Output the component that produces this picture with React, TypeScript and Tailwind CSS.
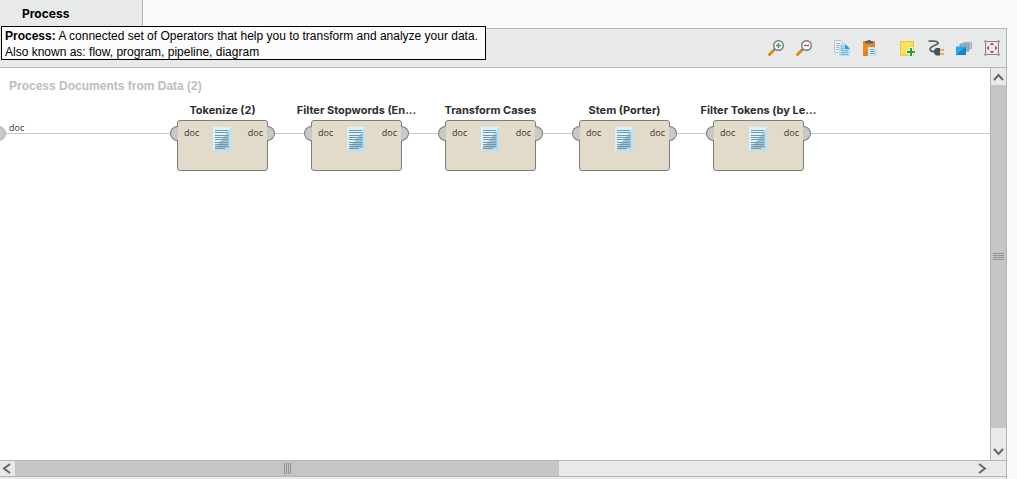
import type { ReactNode } from "react";

type Operator = { name: string; x: number };

const operators: Operator[] = [
  { name: "Tokenize (2)", x: 177 },
  { name: "Filter Stopwords (En...", x: 311 },
  { name: "Transform Cases", x: 445 },
  { name: "Stem (Porter)", x: 579 },
  { name: "Filter Tokens (by Le...", x: 713 },
];

function Icon({ children }: { children: ReactNode }) {
  return (
    <svg viewBox="0 0 16 16" className="block size-4" aria-hidden="true">
      {children}
    </svg>
  );
}

function Magnifier({ plus }: { plus?: boolean }) {
  return (
    <Icon>
      <path d="M1.500 14.500 5.500 10.500" stroke="#e08a16" strokeWidth="3" strokeLinecap="round" />
      <path d="M5.600 10.400 7 9" stroke="#7a6a55" strokeWidth="1.5" />
      <circle cx="10.500" cy="5.500" r="4.800" fill="#fbfdfc" stroke="#687d89" strokeWidth="1.4" />
      {plus ? (
        <path d="M8 5.5h5M10.5 3v5" stroke="#4b9a2c" strokeWidth="1.4" />
      ) : (
        <path d="M8 5.5h5" stroke="#d9482b" strokeWidth="1.4" />
      )}
    </Icon>
  );
}

function CopyIcon() {
  return (
    <Icon>
      <path d="M.5.5h6l2.500 2.500v9.500H.5z" fill="#eef1f2" stroke="#b9c1c5" />
      <path d="M2 3.500h4M2 5.500h4M2 7.500h3M2 9.500h3" stroke="#aab3b8" />
      <path d="M5 4h7l4 4v8H5z" fill="#b4dff4" />
      <path d="M11 4v5h5z" fill="#1fa0df" />
      <path d="M7 6.500h3M7 8.500h3M7 10.500h7M7 12.500h7M7 14.500h7" stroke="#80b4cc" />
    </Icon>
  );
}

function PasteIcon() {
  return (
    <Icon>
      <path d="M1 1h12v15H1z" fill="#ec7a08" />
      <path d="M1 1h12L1 14z" fill="#f28a1a" />
      <path d="M3 1h2.500V0h3v1H11v2.500H3z" fill="#536570" />
      <path d="M6 7h6l2 2v7H6z" fill="#d6effa" stroke="#9ccbe0" strokeWidth=".6" />
      <path d="M8 9.500h4M8 11.500h5M8 13.500h5" stroke="#5f9cb9" />
    </Icon>
  );
}

function NoteIcon() {
  return (
    <Icon>
      <path d="M.5 1.500h13v14H.5z" fill="#f9e45c" stroke="#e7cb3c" />
      <path d="M13 2v13H1z" fill="#f5dc4a" />
      <path d="M6 12h10M11 7v9" stroke="#f5f7f5" strokeWidth="4" />
      <path d="M7 12h8M11 8v8" stroke="#17a34a" strokeWidth="2" />
    </Icon>
  );
}

function PlugIcon() {
  return (
    <Icon>
      <path
        d="M.5 1.200h5.500c4 0 5.500 2 2.500 3.300L4 6.700C1 8.200 2 11.500 5 11.500h2"
        fill="none"
        stroke="#536570"
        strokeWidth="1.800"
      />
      <path d="M12 8v7.500H9c-2 0-3-1.700-3-3.700S7 8 9 8z" fill="#44545f" />
      <path d="M12 10h4M12 14h4" stroke="#e39a32" strokeWidth="1.600" />
    </Icon>
  );
}

function LayersIcon() {
  return (
    <Icon>
      <path d="M7 2h9v7H7z" fill="#b9c7cd" />
      <path d="M7.500 2.500h8v6h-8z" fill="none" stroke="#a3b3ba" />
      <path d="M4 4h9v7H4z" fill="#96aebb" stroke="#7e96a2" strokeWidth=".8" />
      <path d="M0 6.500h10V15H0z" fill="#2ba7ea" />
      <path d="M10 6.500V15H0z" fill="#0f87d2" />
    </Icon>
  );
}

function FitIcon() {
  return (
    <Icon>
      <path d="M1.500 0v16M14.500 0v16M0 1.500h16M0 14.500h16" stroke="#7b8a91" />
      <path d="M8 2.500 10.200 5H5.800zM8 13.500 10.200 11H5.800zM2.500 8 5 5.800v4.400zM13.500 8 11 5.800v4.400z" fill="#cf4529" />
    </Icon>
  );
}

const toolGroups = [
  [
    { label: "Zoom in", icon: <Magnifier plus /> },
    { label: "Zoom out", icon: <Magnifier /> },
  ],
  [
    { label: "Copy", icon: <CopyIcon /> },
    { label: "Paste", icon: <PasteIcon /> },
  ],
  [
    { label: "Add note", icon: <NoteIcon /> },
    { label: "Auto-wire", icon: <PlugIcon /> },
    { label: "Order operators", icon: <LayersIcon /> },
    { label: "Fit canvas", icon: <FitIcon /> },
  ],
];

function DocumentIcon() {
  return (
    <svg viewBox="0 0 18 24" className="h-6 w-[18px]" aria-hidden="true">
      <path d="M0 0h18v24H0z" fill="#b5e2f6" />
      <path d="M0 0h18L0 24z" fill="#daf2fb" />
      <path d="M16 5v16H2z" fill="#9cc4d6" />
      <path
        d="M2 3.500h13M2 5.500h13M2 8.500h13M2 10.500h13M2 12.500h13M2 15.500h13M2 17.500h13M2 19.500h13M2 21.500h10"
        stroke="#7498a9"
      />
    </svg>
  );
}

function OperatorNode({ name, x }: Operator) {
  return (
    <div className="absolute top-[34px] flex w-[91px] flex-col items-center" style={{ left: x }}>
      <div className="h-[18px] text-[11px] leading-4 font-bold whitespace-nowrap text-[#2f2f2f] [font-family:Inter,sans-serif]">
        {name}
      </div>
      <div className="relative grid h-[51px] w-full grid-cols-[31px_18px_1fr] items-start rounded-[3px] border border-[#7f7d7a] bg-[#e3dbc9] px-1 pt-1.5">
        <span className="absolute top-[5px] -left-2 h-[15px] w-2 rounded-l-full border border-r-0 border-[#7d7d7d] bg-[#c8c8c8]" />
        <span className="absolute top-[5px] -right-2 h-[15px] w-2 rounded-r-full border border-l-0 border-[#7d7d7d] bg-[#c8c8c8]" />
        <span className="pl-0.5 text-[9px] leading-3 text-[#333] [font-family:'Open_Sans',sans-serif]">doc</span>
        <DocumentIcon />
        <span className="text-right text-[9px] leading-3 text-[#333] [font-family:'Open_Sans',sans-serif]">doc</span>
      </div>
    </div>
  );
}

function Chevron({ d }: { d: string }) {
  return (
    <svg viewBox="0 0 15 15" className="block size-[15px]" aria-hidden="true">
      <path d={d} fill="none" stroke="#666" strokeWidth="2" />
    </svg>
  );
}

export default function App() {
  return (
    <div className="flex h-screen flex-col bg-[#fafafa] pr-2.5 [font-family:'Liberation_Sans',Arial,sans-serif]">
      <header className="relative flex h-7 shrink-0" role="tablist">
        <button
          role="tab"
          aria-selected="true"
          className="w-[143px] border-r border-[#b4b6b6] bg-[#e8eaea] pl-[22px] text-left text-[12px] leading-7 font-bold text-black [font-family:Inter,sans-serif]"
        >
          Process
        </button>
        <div
          role="tooltip"
          className="absolute top-[26px] left-px z-10 h-[34px] border border-black bg-[#fcfcfc] pt-px pr-[7px] pl-[3px] text-[12px] leading-4 whitespace-nowrap text-black"
        >
          <b>Process:</b> A connected set of Operators that help you to transform and analyze your data.
          <br />
          Also known as: flow, program, pipeline, diagram
        </div>
      </header>

      <main className="flex min-h-0 flex-1 flex-col border-t border-r border-[#b4b6b6] bg-[#e8eaea] pb-0.5">
        <div role="toolbar" className="flex h-[39px] shrink-0 items-center justify-end gap-[22px] border-b border-[#b4b6b6] pr-1.5">
          {toolGroups.map((group, i) => (
            <div key={i} className="flex gap-3">
              {group.map((tool) => (
                <button key={tool.label} aria-label={tool.label}>
                  {tool.icon}
                </button>
              ))}
            </div>
          ))}
        </div>

        <div className="flex min-h-0 flex-1">
          <section className="relative flex-1 overflow-hidden bg-white">
            <h1 className="pt-2.5 pl-[9px] text-[12px] leading-4 font-bold text-[#bdbdbd]">
              Process Documents from Data (2)
            </h1>
            <div className="absolute top-[65px] right-0 left-0 h-px bg-[#cacaca]" />
            <span className="absolute top-[58px] -left-[9px] size-[15px] rounded-full border border-[#b0b0b0] bg-[#c8c8c8]" />
            <span className="absolute top-[53px] left-[9px] text-[9px] leading-[14px] text-[#333] [font-family:'Open_Sans',sans-serif]">
              doc
            </span>
            {operators.map((op) => (
              <OperatorNode key={op.name} {...op} />
            ))}
          </section>
          <div className="flex w-4 flex-col border-l border-[#b4b6b6]">
            <button aria-label="Scroll up" className="h-[17px]">
              <Chevron d="M3 11 7.500 6 12 11" />
            </button>
            <div className="flex flex-1 flex-col">
              <div className="flex flex-1 flex-col items-center justify-center gap-px bg-[#c4c6c6]">
                {[0, 1, 2, 3].map((n) => (
                  <span key={n} className="h-px w-[11px] bg-[#929494]" />
                ))}
              </div>
            </div>
            <button aria-label="Scroll down" className="flex h-8 items-end">
              <Chevron d="M3 4 7.500 9 12 4" />
            </button>
          </div>
        </div>

        <div className="flex h-[17px] shrink-0 border-y border-[#b4b6b6]">
          <button aria-label="Scroll left" className="w-[15px]">
            <Chevron d="M10 3 4 7.500 10 12" />
          </button>
          <div className="flex flex-1">
            <div className="flex w-17/30 items-center justify-center gap-px bg-[#c4c6c6]">
              {[0, 1, 2, 3].map((n) => (
                <span key={n} className="h-[11px] w-px bg-[#929494]" />
              ))}
            </div>
          </div>
          <button aria-label="Scroll right" className="mr-4 w-[15px]">
            <Chevron d="M4 3 10 7.500 4 12" />
          </button>
        </div>
      </main>
    </div>
  );
}
